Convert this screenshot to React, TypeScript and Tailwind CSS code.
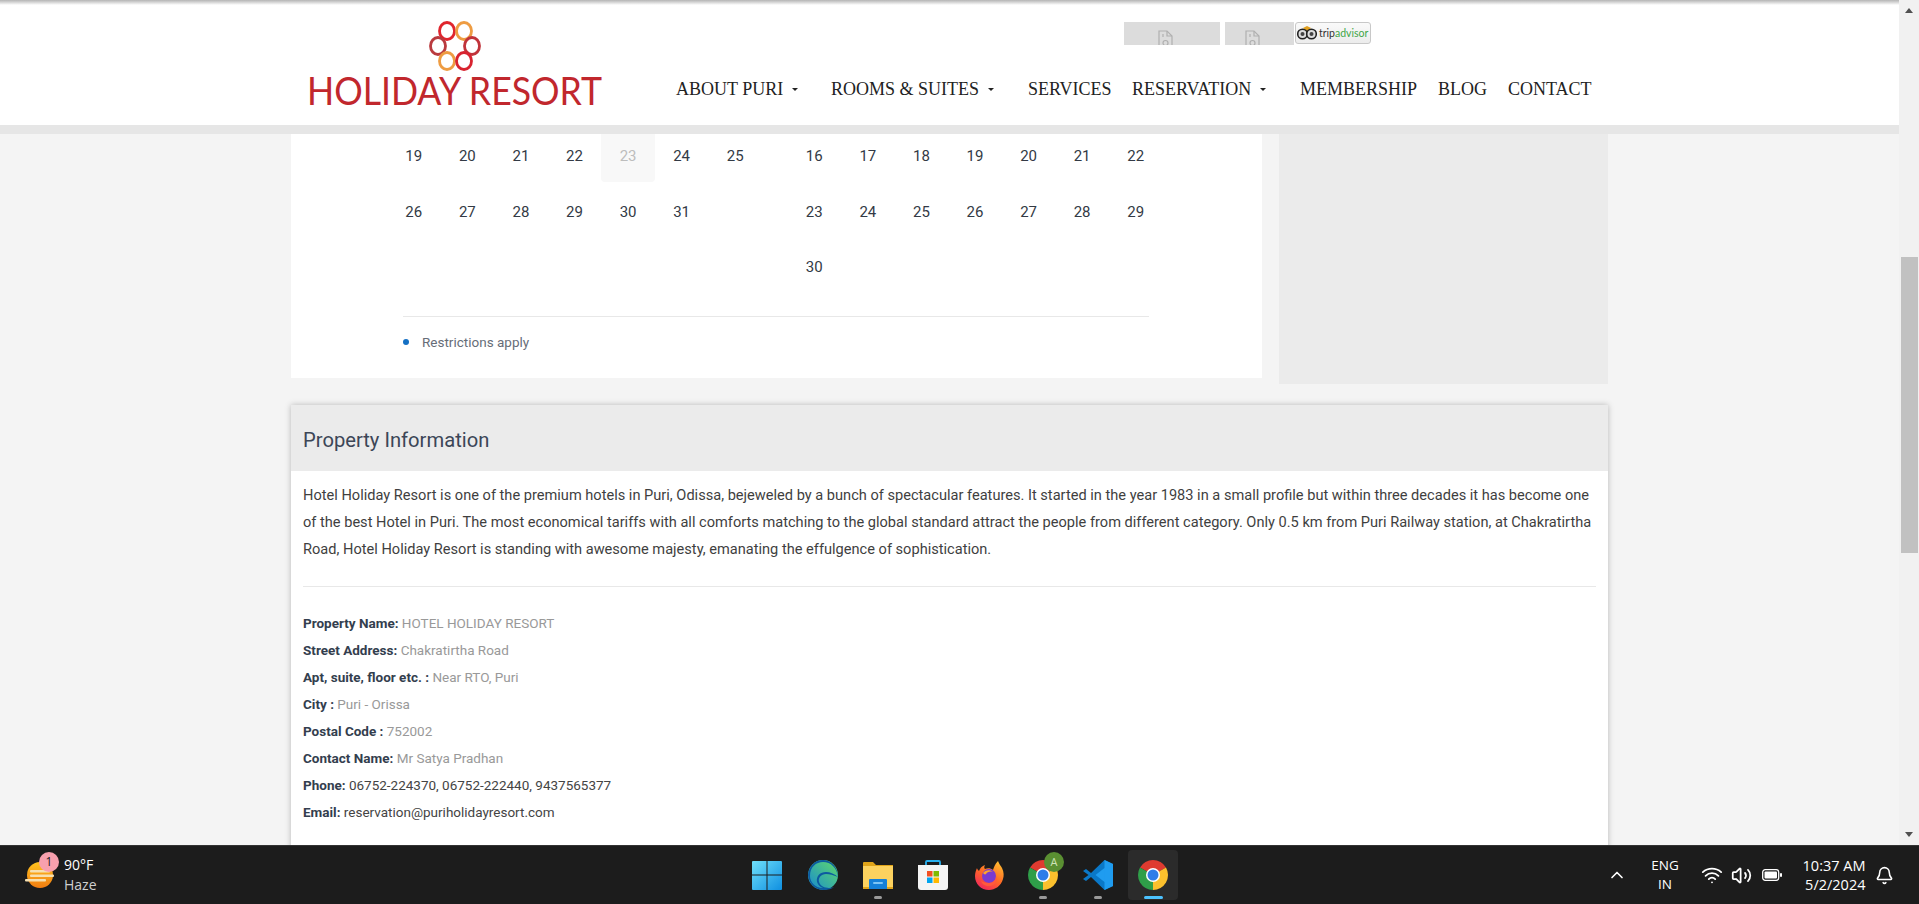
import { Bell, ChevronUp, Volume2, Wifi } from 'lucide-react';

const LEFT_ROWS = [
  [19, 20, 21, 22, 23, 24, 25],
  [26, 27, 28, 29, 30, 31],
  [],
];

const RIGHT_ROWS = [
  [16, 17, 18, 19, 20, 21, 22],
  [23, 24, 25, 26, 27, 28, 29],
  [30],
];

const DETAILS = [
  { label: 'Property Name:', value: 'HOTEL HOLIDAY RESORT' },
  { label: 'Street Address:', value: 'Chakratirtha Road' },
  { label: 'Apt, suite, floor etc. :', value: 'Near RTO, Puri' },
  { label: 'City :', value: 'Puri - Orissa' },
  { label: 'Postal Code :', value: '752002' },
  { label: 'Contact Name:', value: 'Mr Satya Pradhan' },
  { label: 'Phone:', value: '06752-224370, 06752-222440, 9437565377', dark: true },
  { label: 'Email:', value: 'reservation@puriholidayresort.com', dark: true },
];

function Caret() {
  return <span className="ml-[9px] mt-[1px] inline-block h-0 w-0 border-x-[3px] border-t-[3px] border-x-transparent border-t-[#222]" />;
}

function Logo() {
  return (
    <svg width="340" height="122" viewBox="0 0 340 122" className="shrink-0">
      <g fill="none" strokeWidth="2.8">
        <ellipse cx="144" cy="31" rx="7.500" ry="8.500" stroke="#e0252d" />
        <ellipse cx="161" cy="31" rx="7.500" ry="8.500" stroke="#ee9c42" />
        <ellipse cx="135" cy="46" rx="7.500" ry="8.500" stroke="#b93a3e" />
        <ellipse cx="169" cy="46" rx="7.500" ry="8.500" stroke="#c0333a" />
        <ellipse cx="144" cy="61" rx="7.500" ry="8.500" stroke="#ee9c42" />
        <ellipse cx="161" cy="61" rx="7.500" ry="8.500" stroke="#d8232f" />
      </g>
      <text
        x="4"
        y="105"
        textLength="295"
        lengthAdjust="spacingAndGlyphs"
        fontFamily="Lato, 'Liberation Sans', sans-serif"
        fontSize="39"
        fill="#c1272d"
      >
        HOLIDAY RESORT
      </text>
    </svg>
  );
}

function BrokenImage({ className }: { className: string }) {
  return (
    <div className={`h-[23px] overflow-hidden bg-[#dcdcdc] pt-[8px] ${className}`}>
      <svg width="15" height="18" viewBox="0 0 15 18" fill="none" stroke="#b0b0b0" strokeWidth="1.200">
        <path d="M1 1h8l5 5v11H1z" />
        <path d="M9 1v5h5" />
        <path d="M5 4v3" />
        <circle cx="7.500" cy="13" r="2.500" />
      </svg>
    </div>
  );
}

function TripAdvisor() {
  return (
    <div className="flex h-[22px] w-[76px] items-center gap-[2px] rounded-[3px] border border-[#c8c8c8] bg-gradient-to-b from-[#fafafa] to-[#ececec] pl-[1px]">
      <svg width="20" height="14" viewBox="0 0 20 14" className="shrink-0">
        <path d="M6 2 L10 0 L14 2 L10 6z" fill="#e0a020" />
        <circle cx="5.500" cy="8" r="4.800" fill="#ddd" stroke="#222" strokeWidth="1.600" />
        <circle cx="14.500" cy="8" r="4.800" fill="#ddd" stroke="#222" strokeWidth="1.600" />
        <circle cx="5.500" cy="8" r="2" fill="#444" />
        <circle cx="14.500" cy="8" r="2" fill="#444" />
      </svg>
      <span className="font-['Lato',sans-serif] text-[10.500px] leading-none text-[#333]">
        trip<span className="text-[#3fa648]">advisor</span>
      </span>
    </div>
  );
}

function Header() {
  return (
    <header className="shrink-0 bg-white">
      <div className="h-[5px] bg-gradient-to-b from-[#b4b4b4] to-white" />
      <div className="-mt-[5px] flex h-[125px] pl-[303px]">
        <Logo />
        <div className="ml-[33px] flex w-[916px] flex-col">
          <div className="ml-[448px] mt-[22px] flex h-[23px]">
            <BrokenImage className="w-[96px] pl-[34px]" />
            <BrokenImage className="ml-[5px] w-[69px] pl-[20px]" />
            <div className="ml-[1px]">
              <TripAdvisor />
            </div>
          </div>
          <nav className="mt-[33px] flex items-center font-['Liberation_Serif',serif] text-[18px] leading-[22px] text-[#222]">
            <span className="flex w-[155px] items-center">
              ABOUT PURI
              <Caret />
            </span>
            <span className="flex w-[197px] items-center">
              ROOMS &amp; SUITES
              <Caret />
            </span>
            <span className="w-[104px]">SERVICES</span>
            <span className="flex w-[168px] items-center">
              RESERVATION
              <Caret />
            </span>
            <span className="w-[138px]">MEMBERSHIP</span>
            <span className="w-[70px]">BLOG</span>
            <span>CONTACT</span>
          </nav>
        </div>
      </div>
      <div className="h-[9px] bg-[#e6e6e6]" />
    </header>
  );
}

function Month({ rows, mutedDay }: { rows: number[][]; mutedDay?: number }) {
  return (
    <div className="grid w-[375px] grid-cols-7">
      {rows.map((row, r) => (
        <div key={r} className="col-span-7 grid h-[55.500px] grid-cols-7">
          {row.map(day => (
            <div
              key={day}
              className={`flex h-[48px] justify-center rounded-b-[4px] pt-[12px] text-[15px] leading-[20px] ${
                day === mutedDay ? 'bg-[#f8f8f8] text-[#bdbdbd]' : 'text-[#333a45]'
              }`}
            >
              {day}
            </div>
          ))}
        </div>
      ))}
    </div>
  );
}

function CalendarCard() {
  return (
    <div className="h-[244px] w-[971px] bg-white pl-[96px]">
      <div className="flex gap-[25.500px]">
        <Month rows={LEFT_ROWS} mutedDay={23} />
        <Month rows={RIGHT_ROWS} />
      </div>
      <div className="ml-[16px] mt-[15px] w-[746px] border-t border-[#e8e8e8] pt-[16px]">
        <div className="flex items-center">
          <span className="h-[6px] w-[6px] rounded-full bg-[#1470c4]" />
          <span className="ml-[13px] text-[13.500px] leading-[18px] text-[#666d78]">Restrictions apply</span>
        </div>
      </div>
    </div>
  );
}

function PropertyCard() {
  return (
    <section className="mt-[21px] w-[1317px] bg-white pb-[40px] shadow-[0_0_6px_rgba(0,0,0,0.25)]">
      <h2 className="flex h-[66px] items-center bg-[#ebebeb] pl-[12px] pt-[4px] text-[20.200px] font-normal text-[#3c4657]">
        Property Information
      </h2>
      <div className="px-[12px] pt-[11px]">
        <p className="text-[14.600px] leading-[27px] text-[#3f3f3f]">
          Hotel Holiday Resort is one of the premium hotels in Puri, Odissa, bejeweled by a bunch of spectacular
          features. It started in the year 1983 in a small profile but within three decades it has become one of the
          best Hotel in Puri. The most economical tariffs with all comforts matching to the global standard attract
          the people from different category. Only 0.5 km from Puri Railway station, at Chakratirtha Road, Hotel
          Holiday Resort is standing with awesome majesty, emanating the effulgence of sophistication.
        </p>
        <div className="mt-[23px] border-t border-[#e8e8e8] pt-[23px]">
          {DETAILS.map(row => (
            <div key={row.label} className="text-[13.500px] leading-[27px]">
              <b className="font-bold text-[#333e4e]">{row.label}</b>{' '}
              <span className={row.dark ? 'text-[#444]' : 'text-[#999]'}>{row.value}</span>
            </div>
          ))}
        </div>
      </div>
    </section>
  );
}

function Scrollbar() {
  return (
    <div className="flex h-full w-[20px] shrink-0 flex-col items-center bg-[#f1f1f1]">
      <div className="mt-[8px] h-0 w-0 border-x-[4.500px] border-b-[5px] border-x-transparent border-b-[#505050]" />
      <div className="mt-[244px] h-[296px] w-[17px] bg-[#c1c1c1]" />
      <div className="mt-auto mb-[8px] h-0 w-0 border-x-[4.500px] border-t-[5px] border-x-transparent border-t-[#505050]" />
    </div>
  );
}

function WinLogo() {
  return (
    <svg width="30" height="30" viewBox="0 0 30 30">
      <defs>
        <linearGradient id="win" x1="0" y1="0" x2="1" y2="1">
          <stop offset="0" stopColor="#6fe0fb" />
          <stop offset="1" stopColor="#0f8fe0" />
        </linearGradient>
      </defs>
      <path d="M1 1h13.500v13.500H0V2a1 1 0 0 1 1-1zM15.500 1H29a1 1 0 0 1 1 1v12.500H15.500zM0 15.500h14.500V30H1a1 1 0 0 1-1-1zM15.500 15.500H30V29a1 1 0 0 1-1 1H15.500z" fill="url(#win)" />
    </svg>
  );
}

function EdgeLogo() {
  return (
    <svg width="30" height="30" viewBox="0 0 30 30">
      <defs>
        <linearGradient id="edgeTop" x1="0" y1="1" x2="1" y2="0">
          <stop offset="0" stopColor="#1a8ecb" />
          <stop offset="1" stopColor="#5fd86d" />
        </linearGradient>
      </defs>
      <circle cx="15" cy="15" r="15" fill="url(#edgeTop)" />
      <path d="M0 15C1 24 8 30 16 30c4 0 8-1 10-3-5 2-13 1-15-5-1-4 2-8 7-8 4 0 7 1 12 3C30 7 23 0 15 0 7 0 1 6 0 15z" fill="#0c5aa0" />
      <path d="M30 17c-3-3-8-5-12-5-6 0-10 4-9 10 1 3 3 5 6 6-8 0-13-6-13-12C2 7 8 2 15 2c8 0 14 6 15 15z" fill="url(#edgeTop)" />
    </svg>
  );
}

function FolderLogo() {
  return (
    <svg width="30" height="28" viewBox="0 0 30 28">
      <path d="M0 2a1 1 0 0 1 1-1h9l3 3h17v4H0z" fill="#e0a419" />
      <path d="M0 5h30v22a1 1 0 0 1-1 1H1a1 1 0 0 1-1-1z" fill="#fcd25f" />
      <path d="M0 26h30v1a1 1 0 0 1-1 1H1a1 1 0 0 1-1-1z" fill="#e0a419" />
      <path d="M6 19a1 1 0 0 1 1-1h16a1 1 0 0 1 1 1v9H6z" fill="#1480d8" />
      <rect x="10" y="21" width="10" height="2" rx="1" fill="#7cc4f4" />
    </svg>
  );
}

function StoreLogo() {
  return (
    <svg width="30" height="30" viewBox="0 0 30 30">
      <path d="M8 6V2a1 1 0 0 1 1-1h12a1 1 0 0 1 1 1v4" fill="none" stroke="#28b0ef" strokeWidth="1.800" />
      <path d="M0 5h30v22a3 3 0 0 1-3 3H3a3 3 0 0 1-3-3z" fill="#f4f4f4" />
      <rect x="9" y="11" width="5.500" height="5.500" fill="#f25022" />
      <rect x="15.500" y="11" width="5.500" height="5.500" fill="#7fba00" />
      <rect x="9" y="17.500" width="5.500" height="5.500" fill="#00a4ef" />
      <rect x="15.500" y="17.500" width="5.500" height="5.500" fill="#ffb900" />
    </svg>
  );
}

function FirefoxLogo() {
  return (
    <svg width="30" height="30" viewBox="0 0 30 30">
      <defs>
        <linearGradient id="fox" x1="0.8" y1="0" x2="0.2" y2="1">
          <stop offset="0" stopColor="#ffbd2f" />
          <stop offset="0.5" stopColor="#ff6a25" />
          <stop offset="1" stopColor="#f0235f" />
        </linearGradient>
      </defs>
      <path d="M24 1c1 3 3 5 4 7 2 4 2 8 1 11-2 7-8 11-14 11C7 30 1 24 1 16c0-3 1-6 2-8 0 1 1 2 2 3 1-3 3-5 6-6-1 2-1 3 0 4 2-1 6-1 8 1 1-3 2-6 5-9z" fill="url(#fox)" />
      <circle cx="15" cy="16" r="7" fill="#7a3bd0" />
      <path d="M9 13c2-3 7-4 10-1-3-1-6 0-7 2-1 1-2 0-3-1z" fill="#ffa52a" />
      <path d="M15 23c4 0 7-3 7-7 2 5-2 10-7 10-4 0-7-2-8-5 2 1 5 2 8 2z" fill="#ff5a3c" />
    </svg>
  );
}

function ChromeLogo() {
  return (
    <svg width="30" height="30" viewBox="0 0 30 30">
      <path d="M15 15 L2.010 7.500 A15 15 0 0 1 27.990 7.500z" fill="#df3b30" />
      <path d="M15 15 L27.990 7.500 A15 15 0 0 1 15 30z" fill="#fbc02d" />
      <path d="M15 15 L15 30 A15 15 0 0 1 2.010 7.500z" fill="#2f9e49" />
      <circle cx="15" cy="15" r="7" fill="#fff" />
      <circle cx="15" cy="15" r="5.500" fill="#2f7de9" />
    </svg>
  );
}

function VsCodeLogo() {
  return (
    <svg width="30" height="30" viewBox="0 0 30 30">
      <path d="M21.500 0 30 4v22l-8.500 4L8 17l-5 4-3-2 5.500-4L0 11l3-2 5 4z" fill="#0a78c8" />
      <path d="M21.500 0 30 4v22l-8.500 4zM21.500 8 12.500 15l9 7z" fill="#1f9cf0" fillRule="evenodd" />
    </svg>
  );
}

function TaskItem({ width, dot, children }: { width: number; dot?: boolean; children: React.ReactNode }) {
  return (
    <div className="relative flex h-[50px] items-center justify-center" style={{ width }}>
      {children}
      {dot && <span className="absolute bottom-[1px] h-[3px] w-[8px] rounded-full bg-[#9a9a9a]" />}
    </div>
  );
}

function WeatherIcon() {
  return (
    <svg width="29" height="28" viewBox="0 0 29 28">
      <defs>
        <linearGradient id="sun" x1="0" y1="0" x2="0" y2="1">
          <stop offset="0" stopColor="#ffc21e" />
          <stop offset="1" stopColor="#f27d12" />
        </linearGradient>
      </defs>
      <circle cx="15" cy="14" r="13" fill="url(#sun)" />
      <g fill="#f7e0b0">
        <rect x="5" y="9" width="20" height="2.500" rx="1" />
        <rect x="5" y="13.500" width="24" height="2.500" rx="1" />
        <rect x="0" y="18" width="21" height="2.500" rx="1" />
      </g>
    </svg>
  );
}

function Taskbar() {
  return (
    <footer className="flex h-[59px] shrink-0 items-center border-t border-[#333] bg-[#1c1c1c] font-['Open_Sans',sans-serif] text-white">
      <div className="relative ml-[25px] flex w-[340px] items-center">
        <WeatherIcon />
        <span className="absolute -top-[3px] left-[14px] flex h-[20px] w-[20px] items-center justify-center rounded-full bg-[#f8a0ae] text-[12px] text-[#222]">
          1
        </span>
        <div className="ml-[10px] text-[14px] leading-[20px]">
          <div>90°F</div>
          <div className="text-[#cfcfcf]">Haze</div>
        </div>
      </div>
      <div className="ml-[387px] flex items-center">
        <TaskItem width={30}><WinLogo /></TaskItem>
        <div className="ml-[26px]"><TaskItem width={30}><EdgeLogo /></TaskItem></div>
        <div className="ml-[25px]"><TaskItem width={30} dot><FolderLogo /></TaskItem></div>
        <div className="ml-[25px]"><TaskItem width={30}><StoreLogo /></TaskItem></div>
        <div className="ml-[26px]"><TaskItem width={30}><FirefoxLogo /></TaskItem></div>
        <div className="ml-[24px]">
          <TaskItem width={30} dot>
            <ChromeLogo />
            <span className="absolute right-[-6px] top-[2px] flex h-[20px] w-[20px] items-center justify-center rounded-full bg-[#5a8f32] text-[11px] text-[#cfe3b8]">
              A
            </span>
          </TaskItem>
        </div>
        <div className="ml-[25px]"><TaskItem width={30} dot><VsCodeLogo /></TaskItem></div>
        <div className="relative ml-[15px] flex h-[50px] w-[50px] items-center justify-center rounded-[4px] bg-[#2b2b2b]">
          <ChromeLogo />
          <span className="absolute bottom-[1px] h-[3px] w-[19px] rounded-full bg-[#4cc2ff]" />
        </div>
      </div>
      <div className="ml-[429px] flex items-center">
        <ChevronUp size={20} strokeWidth={2} />
        <div className="ml-[17px] w-[42px] text-center text-[13.500px] leading-[19px]">
          <div>ENG</div>
          <div>IN</div>
        </div>
        <Wifi size={22} className="ml-[15px]" />
        <Volume2 size={21} className="ml-[8px]" />
        <svg width="20" height="12" viewBox="0 0 20 12" className="ml-[9.500px]">
          <rect x="0.700" y="0.700" width="16" height="10.600" rx="2.500" fill="none" stroke="#fff" strokeWidth="1.300" />
          <rect x="2.500" y="2.500" width="12.500" height="7" rx="1" fill="#fff" />
          <rect x="18" y="4" width="2" height="4" rx="1" fill="#fff" />
        </svg>
        <div className="ml-[14px] w-[70px] text-right text-[14.500px] leading-[19px]">
          <div className="whitespace-nowrap">10:37 AM</div>
          <div>5/2/2024</div>
        </div>
        <Bell size={19} className="ml-[9.500px]" />
      </div>
    </footer>
  );
}

export default function App() {
  return (
    <div className="flex h-[904px] w-full flex-col overflow-hidden bg-[#f4f4f4] font-['Roboto',sans-serif]">
      <div className="flex h-[845px] shrink-0 overflow-hidden">
        <div className="flex min-w-0 flex-1 flex-col">
          <Header />
          <main className="pl-[291px]">
            <div className="flex h-[250px] items-start">
              <CalendarCard />
              <div className="ml-[17px] h-[250px] w-[329px] bg-[#ebebeb]" />
            </div>
            <PropertyCard />
          </main>
        </div>
        <Scrollbar />
      </div>
      <Taskbar />
    </div>
  );
}
